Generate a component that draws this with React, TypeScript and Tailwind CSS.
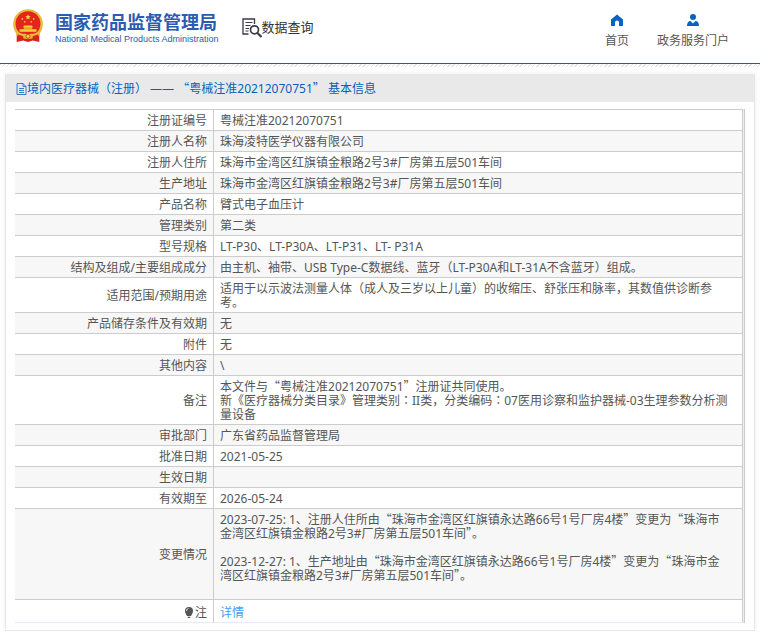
import React from 'react';

interface Row {
  label: string;
  value: string;
}

const rows: Row[] = [
  { label: '注册证编号', value: '粤械注准20212070751' },
  { label: '注册人名称', value: '珠海凌特医学仪器有限公司' },
  { label: '注册人住所', value: '珠海市金湾区红旗镇金粮路2号3#厂房第五层501车间' },
  { label: '生产地址', value: '珠海市金湾区红旗镇金粮路2号3#厂房第五层501车间' },
  { label: '产品名称', value: '臂式电子血压计' },
  { label: '管理类别', value: '第二类' },
  { label: '型号规格', value: 'LT-P30、LT-P30A、LT-P31、LT- P31A' },
  { label: '结构及组成/主要组成成分', value: '由主机、袖带、USB Type-C数据线、蓝牙（LT-P30A和LT-31A不含蓝牙）组成。' },
  { label: '适用范围/预期用途', value: '适用于以示波法测量人体（成人及三岁以上儿童）的收缩压、舒张压和脉率，其数值供诊断参考。' },
  { label: '产品储存条件及有效期', value: '无' },
  { label: '附件', value: '无' },
  { label: '其他内容', value: '\\' },
  {
    label: '备注',
    value: '本文件与“粤械注准20212070751”注册证共同使用。\n新《医疗器械分类目录》管理类别：II类，分类编码：07医用诊察和监护器械-03生理参数分析测量设备',
  },
  { label: '审批部门', value: '广东省药品监督管理局' },
  { label: '批准日期', value: '2021-05-25' },
  { label: '生效日期', value: '' },
  { label: '有效期至', value: '2026-05-24' },
  {
    label: '变更情况',
    value:
      '2023-07-25: 1、注册人住所由“珠海市金湾区红旗镇永达路66号1号厂房4楼”变更为“珠海市金湾区红旗镇金粮路2号3#厂房第五层501车间”。\n\n2023-12-27: 1、生产地址由“珠海市金湾区红旗镇永达路66号1号厂房4楼”变更为“珠海市金湾区红旗镇金粮路2号3#厂房第五层501车间”。\n\n',
  },
];

// Curly quotes are set full width, colons centred in their square
const Text: React.FC<{ children: string }> = ({ children }) => (
  <>
    {children.split(/([“”：])/).map((part, i) => {
      if (part === '“' || part === '”') {
        return <span key={i} className="font-['Noto_Sans_CJK_SC',sans-serif] leading-none">{part}</span>;
      }
      if (part === '：') {
        return <span key={i} lang="zh-TW" className="font-['Noto_Sans_CJK_TC',sans-serif] leading-none">{part}</span>;
      }
      return part;
    })}
  </>
);

const Emblem = () => (
  <svg viewBox="0 0 34 36" className="h-9 w-8 shrink-0" aria-hidden="true">
    <path d="M5 24 L29 24 L29 35 L22 33.500 L17 35 L12 33.500 L5 35 Z" fill="#d8231c" />
    <circle cx="17" cy="16" r="15.800" fill="#e9b93a" />
    <circle cx="17" cy="15.500" r="13.200" fill="#e3251b" />
    <path d="M17 5.400l.8 2 2.200.2-1.700 1.500.5 2.100-1.800-1.200-1.800 1.200.5-2.100-1.700-1.500 2.200-.2z" fill="#f6cf3c" />
    <g fill="#f6cf3c">
      <circle cx="11" cy="10.500" r=".9" />
      <circle cx="23" cy="10.500" r=".9" />
      <circle cx="13.500" cy="13.500" r=".9" />
      <circle cx="20.500" cy="13.500" r=".9" />
      <path d="M13 17.500h8l1.500 1.700h-11zM12.500 19.700h9V21h-9zM8 21.500h18V24H8z" />
    </g>
    <path d="M3 22c4 4 9 4.500 14 4.500S27 26 31 22l-2 6c-4 3-8 1-12 4-4-3-8-1-12-4z" fill="#e9b93a" />
    <path d="M6 27l6 2v3l-6-1zM28 27l-6 2v3l6-1z" fill="#d8231c" />
    <circle cx="17" cy="29" r="2.200" fill="#f6cf3c" stroke="#d8231c" strokeWidth=".8" />
  </svg>
);

const SearchDoc = () => (
  <svg viewBox="0 0 20 20" className="size-5 shrink-0" fill="none" stroke="#3a3a4a" aria-hidden="true">
    <path d="M12.500 6V1H1v15h5.500" strokeWidth="1.300" />
    <path d="M3.500 4.500h7M3.500 7.500h5M3.500 10.500h3.500M3.500 13h3" strokeWidth="1" />
    <circle cx="12.500" cy="11.800" r="4" strokeWidth="1.700" />
    <path d="M15.500 15l4 4" strokeWidth="2.200" />
  </svg>
);

const HomeIcon = () => (
  <svg viewBox="0 0 12 12" className="size-3" fill="#0a62c4" aria-hidden="true">
    <path d="M6 .5L0 5.500V12h4V8.500a2 2 0 0 1 4 0V12h4V5.500z" />
  </svg>
);

const UserIcon = () => (
  <svg viewBox="0 0 12 12" className="size-3" fill="#0a62c4" aria-hidden="true">
    <circle cx="6" cy="3" r="3" />
    <path d="M0 12c0-3 1.200-5 3.500-5L6 9.500 8.500 7C10.800 7 12 9 12 12z" />
  </svg>
);

const App: React.FC = () => (
  <div className="font-['Noto_Sans','Noto_Sans_CJK_SC',sans-serif] text-xs text-[#555]" lang="zh-CN">
    <header className="flex h-16 items-start justify-between border-b border-[#0a62b5] bg-white pl-3 pr-[31px]">
      <div className="flex items-start">
        <a href="#" className="flex gap-[11px] pt-2">
          <Emblem />
          <span className="flex flex-col pt-1 text-[#2b5cb0]">
            <span className="text-lg leading-5 font-bold">国家药品监督管理局</span>
            <span className="font-['Liberation_Sans',sans-serif] text-[9px] leading-[14px]">
              National Medical Products Administration
            </span>
          </span>
        </a>
        <h1 className="flex pt-[18px] pl-[23px] text-[13px] leading-[18px] font-normal text-[#333]">
          <SearchDoc />
          数据查询
        </h1>
      </div>
      <nav className="flex gap-7 pt-[14px]">
        <a href="#" className="flex flex-col items-center gap-[5px]">
          <HomeIcon />
          <span className="leading-5">首页</span>
        </a>
        <a href="#" className="flex flex-col items-center gap-[5px]">
          <UserIcon />
          <span className="leading-5">政务服务门户</span>
        </a>
      </nav>
    </header>
    <div className="h-[3px] bg-[repeating-linear-gradient(135deg,#e2e2e2_0px,#e2e2e2_1px,#fff_1px,#fff_3px)]" />

    <main className="mx-[5px] mt-[7px] border border-t-0 border-[#e6e6e6] bg-white shadow-[0_0_6px_#eee]">
      <h2 className="flex h-[28px] items-center bg-[#e9e9e9] px-[10px] pt-px whitespace-pre text-[#0a5fbe]">
        <svg viewBox="0 0 11 12" className="h-3 w-[11px]" fill="none" stroke="currentColor" aria-hidden="true">
          <path d="M1 .5h6l3 3v8H1zM7 .5v3h3M3 5.500h5M3 7.500h5M3 9.500h5" strokeWidth=".8" />
        </svg>
        <span>
          <Text>境内医疗器械（注册） —— “粤械注准20212070751” 基本信息</Text>
        </span>
      </h2>
      <div className="px-[9px] py-[7px]">
        <table className="w-full border-separate border-spacing-0 border-r border-[#ccc] bg-[#eee] pr-px leading-[14px]">
          <tbody>
            {rows.map((row, i) => (
              <tr key={i} className="odd:bg-white even:bg-[#f7f7f7] first:bg-[#fcfcfc]">
                <th scope="row" className="w-[199px] border-t border-r border-[#ccc] pt-1 pr-[6px] pb-[2px] text-right font-normal">
                  {row.label}
                </th>
                <td className="h-[21px] border-t border-r border-[#ccc] pt-1 pr-3 pb-[2px] pl-[6px] whitespace-pre-wrap">
                  <Text>{row.value}</Text>
                </td>
              </tr>
            ))}
            <tr className="bg-white">
              <th scope="row" className="w-[199px] border-t border-r border-b border-[#ccc] border-b-[#e8ebf5] pt-[6px] pr-[6px] pb-[2px] text-right font-normal">
                <span className="flex items-center justify-end gap-px">
                  <svg viewBox="0 0 10 12" className="h-3 w-[10px]" aria-hidden="true">
                    <path d="M5 0a4 4 0 0 0-4 4c0 2.200 1.500 3.500 2 5h4c.5-1.500 2-2.800 2-5a4 4 0 0 0-4-4zM3.500 9.800h3L6 11H4z" fill="#555" />
                    <path d="M2.400 4A2.600 2.600 0 0 1 4.500 1.500" fill="none" stroke="#fff" strokeWidth=".8" />
                  </svg>
                  注
                </span>
              </th>
              <td className="border-t border-r border-b border-[#ccc] border-b-[#e8ebf5] pt-[6px] pb-[2px] pl-[6px]">
                <a href="#" className="text-[#409eff]">详情</a>
              </td>
            </tr>
          </tbody>
        </table>
      </div>
    </main>
  </div>
);

export default App;
